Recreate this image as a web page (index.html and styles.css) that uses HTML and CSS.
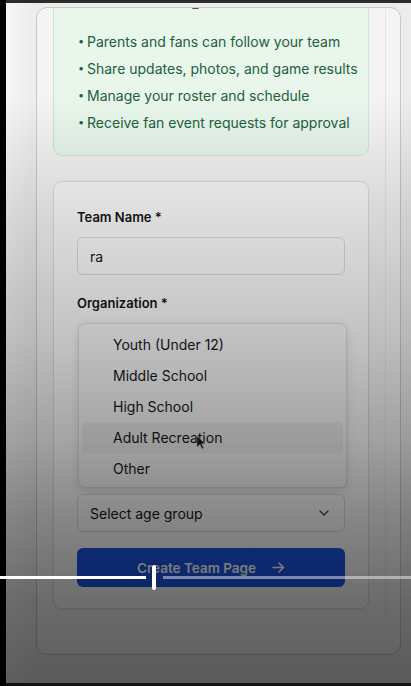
FILE: index.html
```html
<!DOCTYPE html>
<html lang="en">
<head>
<meta charset="utf-8">
<title>Create Team</title>
<link rel="stylesheet" href="styles.css">
</head>
<body>
<div class="frame">
  <div class="leftbar"></div>
  <div class="main">
    <div class="topbar"></div>
    <div class="stage">
      <div class="card">
        <span class="notch"></span>
        <div class="inner">
          <div class="perks">
            <ul class="perk-list">
              <li><span class="dot">•</span>Parents and fans can follow your team</li>
              <li><span class="dot">•</span>Share updates, photos, and game results</li>
              <li><span class="dot">•</span>Manage your roster and schedule</li>
              <li><span class="dot">•</span>Receive fan event requests for approval</li>
            </ul>
          </div>
          <div class="form">
            <div class="label">Team Name *</div>
            <div class="input">ra</div>
            <div class="label label-org">Organization *</div>
            <div class="popup">
              <div class="opt">Youth (Under 12)</div>
              <div class="opt">Middle School</div>
              <div class="opt">High School</div>
              <div class="opt opt-hover">Adult Recreation</div>
              <div class="opt">Other</div>
            </div>
            <div class="select">
              <span>Select age group</span>
              <svg class="chev" width="10" height="6" viewBox="0 0 10 6"><path d="M1 1l4 4 4-4" fill="none" stroke="#4a4a4a" stroke-width="1.4" stroke-linecap="round" stroke-linejoin="round"/></svg>
            </div>
            <div class="btn">
              <span>Create Team Page</span>
              <svg width="13" height="11" viewBox="0 0 13 11"><path d="M1 5.5h10.5M7 1l4.5 4.5L7 10" fill="none" stroke="#ffffff" stroke-width="1.5" stroke-linecap="round" stroke-linejoin="round"/></svg>
            </div>
          </div>
        </div>
      </div>
    </div>
    <div class="bottombar"></div>
  </div>
</div>
<div class="shade"></div>
<svg class="cursor" width="10" height="15" viewBox="0 0 10 15"><path d="M1 1v11l3-2.6 2 4.4 1.6-.8-2-4.3H9z" fill="#111" stroke="#777" stroke-width="0.6" stroke-linejoin="round"/></svg>
<div class="scrub">
  <span class="track-done"></span>
  <span class="thumb"></span>
  <span class="track-rest"></span>
</div>
</body>
</html>
```

FILE: styles.css
```css
* { box-sizing: border-box; }
html, body { margin: 0; padding: 0; }
body {
  width: 411px;
  height: 686px;
  overflow: hidden;
  background: #f2f2f2;
  font-family: Inter, "Liberation Sans", sans-serif;
  color: #161616;
  position: relative;
}
.frame { display: flex; height: 686px; }
.leftbar { width: 6px; background: #000; flex: none; }
.main { flex: 1; min-width: 0; display: flex; flex-direction: column; overflow: hidden; }
.topbar { height: 3px; background: #2b2b2b; flex: none; }
.bottombar { height: 3px; background: #2e2e2e; flex: none; }
.stage {
  flex: 1;
  min-height: 0;
  padding: 4px 10px 0 30px;
  background: linear-gradient(to right, #f6f6f6 0px, #ececec 30px, #ececec 100%);
}
.card {
  position: relative;
  height: 648px;
  border: 1px solid #c8c8c8;
  border-radius: 11px;
  background: #f4f4f4;
  overflow: hidden;
  padding-right: 14px;
}
.notch {
  position: absolute;
  top: -1px;
  left: 155px;
  width: 7px;
  height: 2px;
  border-radius: 1px;
  background: #555;
}
.inner {
  height: 620px;
  padding: 0 16px 0 16px;
  border-right: 1px solid rgba(0,0,0,0.06);
  border-bottom: 1px solid rgba(0,0,0,0.06);
}
.perks {
  margin-top: -10px;
  padding: 29px 6px 19px 24px;
  background: #e8f6ec;
  border: 1px solid #c9e9d3;
  border-radius: 9px;
}
.perk-list {
  margin: 0;
  padding: 0;
  list-style: none;
  color: #23613a;
  font-size: 14px;
  line-height: 27px;
}
.perk-list li { display: flex; white-space: nowrap; }
.dot { width: 9px; font-size: 11px; flex: none; }
.form {
  margin-top: 25px;
  padding: 25px 23px 21px 23px;
  background: #fafafa;
  border: 1px solid #dcdcdc;
  border-radius: 9px;
  box-shadow: 0 1px 3px rgba(0,0,0,0.05);
}
.label {
  font-size: 13px;
  font-weight: 600;
  line-height: 20px;
  color: #141414;
}
.label-org { margin-top: 18px; }
.input {
  margin-top: 10px;
  height: 38px;
  padding: 0 12px;
  display: flex;
  align-items: center;
  font-size: 14px;
  color: #161616;
  background: #fbfbfb;
  border: 1px solid #d9d9d9;
  border-radius: 6px;
}
.popup {
  margin: 10px -2px 0 1px;
  height: 165px;
  padding: 5px 3px;
  background: #f7f7f7;
  border: 1px solid rgba(0,0,0,0.10);
  border-radius: 7px;
  box-shadow: 0 3px 10px rgba(0,0,0,0.12);
}
.opt {
  height: 31px;
  display: flex;
  align-items: center;
  padding-left: 31px;
  font-size: 14px;
  color: #171717;
  border-radius: 4px;
}
.opt-hover { background: rgba(0,0,0,0.045); }
.select {
  margin-top: 6px;
  height: 38px;
  padding: 0 15px 0 12px;
  display: flex;
  align-items: center;
  justify-content: space-between;
  font-size: 14px;
  color: #161616;
  background: #fbfbfb;
  border: 1px solid #dadada;
  border-radius: 6px;
}
.btn {
  margin: 16px 0 0 0;
  height: 39px;
  display: flex;
  align-items: center;
  justify-content: center;
  gap: 16px;
  background: #1b54e4;
  border-radius: 6px;
  color: #ffffff;
  font-size: 13.5px;
  font-weight: 600;
}
.shade {
  position: absolute;
  inset: 0;
  pointer-events: none;
  background: linear-gradient(to bottom,
    rgba(0,0,0,0) 0%,
    rgba(0,0,0,0) 14%,
    rgba(0,0,0,0.10) 29%,
    rgba(0,0,0,0.22) 49%,
    rgba(0,0,0,0.34) 64%,
    rgba(0,0,0,0.46) 75%,
    rgba(0,0,0,0.56) 87.5%,
    rgba(0,0,0,0.62) 100%);
}
.cursor {
  position: absolute;
  left: 196px;
  top: 435px;
}
.scrub {
  position: absolute;
  left: 0;
  top: 565px;
  width: 411px;
  height: 25px;
  display: flex;
  align-items: center;
}
.track-done { width: 146px; height: 3px; background: #ffffff; flex: none; }
.thumb { margin-left: 6px; width: 4px; height: 25px; border-radius: 2px; background: #ffffff; flex: none; }
.track-rest { margin-left: 7px; flex: 1; height: 3px; background: rgba(255,255,255,0.45); }
```
